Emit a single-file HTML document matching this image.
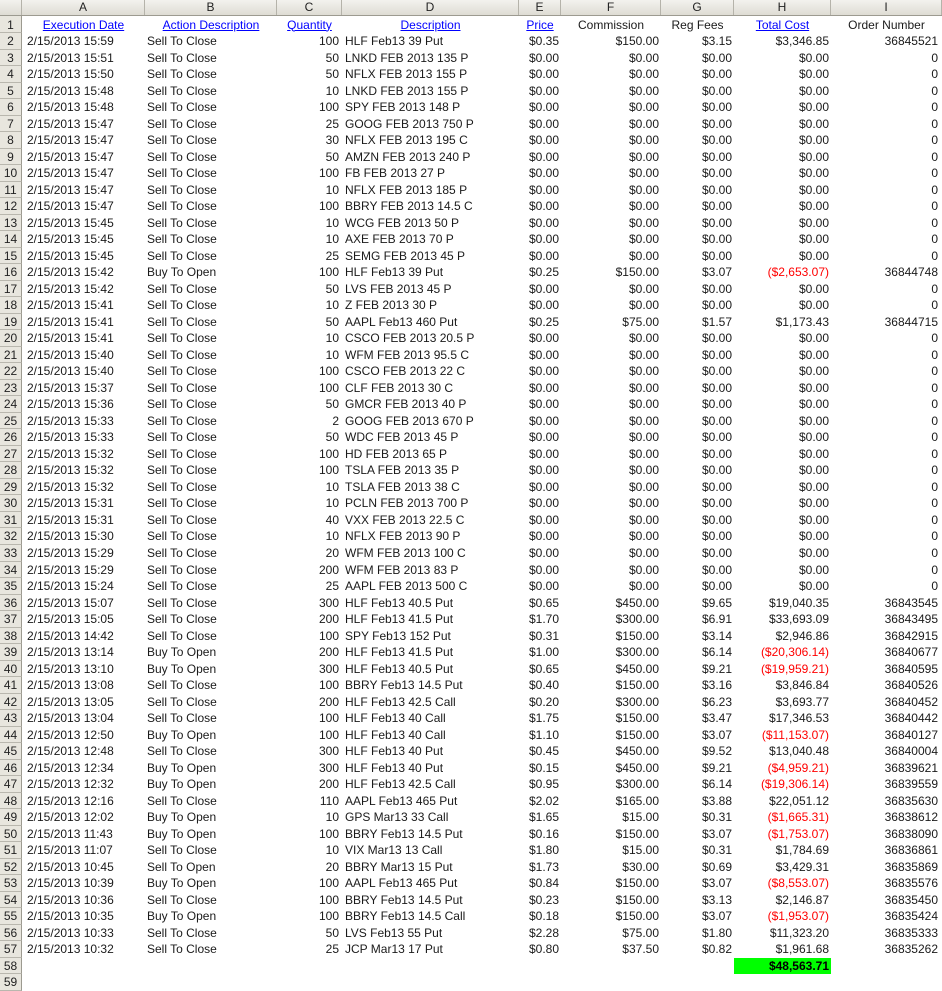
<!DOCTYPE html>
<html><head><meta charset="utf-8"><style>
*{margin:0;padding:0;box-sizing:border-box}
body{width:942px;height:980px;overflow:hidden;background:#fff;font-family:"Liberation Sans",Arial,sans-serif;font-size:12px;color:#1a1a1a;position:relative}
.hd{position:absolute;left:0;top:0;width:942px;height:15.5px;background:linear-gradient(#f3f2ee,#dedcd4);border-bottom:1px solid #9c9a90}
.hd span{position:absolute;top:0;height:15px;line-height:15px;text-align:center;border-right:1px solid #b5b3aa;font-size:12px;color:#222}
.side{position:absolute;left:0;top:15.5px;width:22px;height:965px;background:#e8e6de;border-right:1px solid #9c9a90}
.rows{position:absolute;left:0;top:16.5px;width:942px}
.r{position:relative;height:16.52px;line-height:16px;white-space:nowrap}
.r span{position:absolute;top:0;overflow:visible}
.n{left:0;width:22px;text-align:center;background:#e8e6de;border-bottom:1px solid #b9b7ae;border-right:1px solid #9c9a90;height:16.52px;font-size:12px;color:#222}
.a{left:27px}.b{left:147px}.c{left:277px;width:62px;text-align:right}.d{left:345px}
.e{left:519px;width:40px;text-align:right}.f{left:561px;width:98px;text-align:right}
.g{left:661px;width:71px;text-align:right}.h{left:734px;width:95px;text-align:right}.i{left:831px;width:107px;text-align:right}
.neg{color:#f00}
.u{color:#00f;text-decoration:underline}
.tot{background:#00ff00;font-weight:bold;color:#000;height:16px}
</style></head><body>
<div class="hd">
<span style="left:0;width:22px"></span>
<span style="left:22px;width:123px">A</span>
<span style="left:145px;width:132px">B</span>
<span style="left:277px;width:65px">C</span>
<span style="left:342px;width:177px">D</span>
<span style="left:519px;width:42px">E</span>
<span style="left:561px;width:100px">F</span>
<span style="left:661px;width:73px">G</span>
<span style="left:734px;width:97px">H</span>
<span style="left:831px;width:111px">I</span>
</div>
<div class="side"></div>
<div class="rows">
<div class="r"><span class="n">1</span><span class="u" style="left:22px;width:123px;text-align:center">Execution Date</span><span class="u" style="left:145px;width:132px;text-align:center">Action Description</span><span class="u" style="left:277px;width:65px;text-align:center">Quantity</span><span class="u" style="left:342px;width:177px;text-align:center">Description</span><span class="u" style="left:519px;width:42px;text-align:center">Price</span><span style="left:561px;width:100px;text-align:center">Commission</span><span style="left:661px;width:73px;text-align:center">Reg Fees</span><span class="u" style="left:734px;width:97px;text-align:center">Total Cost</span><span style="left:831px;width:111px;text-align:center">Order Number</span></div>
<div class="r"><span class="n">2</span><span class="a">2/15/2013 15:59</span><span class="b">Sell To Close</span><span class="c">100</span><span class="d">HLF Feb13 39 Put</span><span class="e">$0.35</span><span class="f">$150.00</span><span class="g">$3.15</span><span class="h">$3,346.85</span><span class="i">36845521</span></div>
<div class="r"><span class="n">3</span><span class="a">2/15/2013 15:51</span><span class="b">Sell To Close</span><span class="c">50</span><span class="d">LNKD FEB 2013 135 P</span><span class="e">$0.00</span><span class="f">$0.00</span><span class="g">$0.00</span><span class="h">$0.00</span><span class="i">0</span></div>
<div class="r"><span class="n">4</span><span class="a">2/15/2013 15:50</span><span class="b">Sell To Close</span><span class="c">50</span><span class="d">NFLX FEB 2013 155 P</span><span class="e">$0.00</span><span class="f">$0.00</span><span class="g">$0.00</span><span class="h">$0.00</span><span class="i">0</span></div>
<div class="r"><span class="n">5</span><span class="a">2/15/2013 15:48</span><span class="b">Sell To Close</span><span class="c">10</span><span class="d">LNKD FEB 2013 155 P</span><span class="e">$0.00</span><span class="f">$0.00</span><span class="g">$0.00</span><span class="h">$0.00</span><span class="i">0</span></div>
<div class="r"><span class="n">6</span><span class="a">2/15/2013 15:48</span><span class="b">Sell To Close</span><span class="c">100</span><span class="d">SPY FEB 2013 148 P</span><span class="e">$0.00</span><span class="f">$0.00</span><span class="g">$0.00</span><span class="h">$0.00</span><span class="i">0</span></div>
<div class="r"><span class="n">7</span><span class="a">2/15/2013 15:47</span><span class="b">Sell To Close</span><span class="c">25</span><span class="d">GOOG FEB 2013 750 P</span><span class="e">$0.00</span><span class="f">$0.00</span><span class="g">$0.00</span><span class="h">$0.00</span><span class="i">0</span></div>
<div class="r"><span class="n">8</span><span class="a">2/15/2013 15:47</span><span class="b">Sell To Close</span><span class="c">30</span><span class="d">NFLX FEB 2013 195 C</span><span class="e">$0.00</span><span class="f">$0.00</span><span class="g">$0.00</span><span class="h">$0.00</span><span class="i">0</span></div>
<div class="r"><span class="n">9</span><span class="a">2/15/2013 15:47</span><span class="b">Sell To Close</span><span class="c">50</span><span class="d">AMZN FEB 2013 240 P</span><span class="e">$0.00</span><span class="f">$0.00</span><span class="g">$0.00</span><span class="h">$0.00</span><span class="i">0</span></div>
<div class="r"><span class="n">10</span><span class="a">2/15/2013 15:47</span><span class="b">Sell To Close</span><span class="c">100</span><span class="d">FB FEB 2013 27 P</span><span class="e">$0.00</span><span class="f">$0.00</span><span class="g">$0.00</span><span class="h">$0.00</span><span class="i">0</span></div>
<div class="r"><span class="n">11</span><span class="a">2/15/2013 15:47</span><span class="b">Sell To Close</span><span class="c">10</span><span class="d">NFLX FEB 2013 185 P</span><span class="e">$0.00</span><span class="f">$0.00</span><span class="g">$0.00</span><span class="h">$0.00</span><span class="i">0</span></div>
<div class="r"><span class="n">12</span><span class="a">2/15/2013 15:47</span><span class="b">Sell To Close</span><span class="c">100</span><span class="d">BBRY FEB 2013 14.5 C</span><span class="e">$0.00</span><span class="f">$0.00</span><span class="g">$0.00</span><span class="h">$0.00</span><span class="i">0</span></div>
<div class="r"><span class="n">13</span><span class="a">2/15/2013 15:45</span><span class="b">Sell To Close</span><span class="c">10</span><span class="d">WCG FEB 2013 50 P</span><span class="e">$0.00</span><span class="f">$0.00</span><span class="g">$0.00</span><span class="h">$0.00</span><span class="i">0</span></div>
<div class="r"><span class="n">14</span><span class="a">2/15/2013 15:45</span><span class="b">Sell To Close</span><span class="c">10</span><span class="d">AXE FEB 2013 70 P</span><span class="e">$0.00</span><span class="f">$0.00</span><span class="g">$0.00</span><span class="h">$0.00</span><span class="i">0</span></div>
<div class="r"><span class="n">15</span><span class="a">2/15/2013 15:45</span><span class="b">Sell To Close</span><span class="c">25</span><span class="d">SEMG FEB 2013 45 P</span><span class="e">$0.00</span><span class="f">$0.00</span><span class="g">$0.00</span><span class="h">$0.00</span><span class="i">0</span></div>
<div class="r"><span class="n">16</span><span class="a">2/15/2013 15:42</span><span class="b">Buy To Open</span><span class="c">100</span><span class="d">HLF Feb13 39 Put</span><span class="e">$0.25</span><span class="f">$150.00</span><span class="g">$3.07</span><span class="h neg">($2,653.07)</span><span class="i">36844748</span></div>
<div class="r"><span class="n">17</span><span class="a">2/15/2013 15:42</span><span class="b">Sell To Close</span><span class="c">50</span><span class="d">LVS FEB 2013 45 P</span><span class="e">$0.00</span><span class="f">$0.00</span><span class="g">$0.00</span><span class="h">$0.00</span><span class="i">0</span></div>
<div class="r"><span class="n">18</span><span class="a">2/15/2013 15:41</span><span class="b">Sell To Close</span><span class="c">10</span><span class="d">Z FEB 2013 30 P</span><span class="e">$0.00</span><span class="f">$0.00</span><span class="g">$0.00</span><span class="h">$0.00</span><span class="i">0</span></div>
<div class="r"><span class="n">19</span><span class="a">2/15/2013 15:41</span><span class="b">Sell To Close</span><span class="c">50</span><span class="d">AAPL Feb13 460 Put</span><span class="e">$0.25</span><span class="f">$75.00</span><span class="g">$1.57</span><span class="h">$1,173.43</span><span class="i">36844715</span></div>
<div class="r"><span class="n">20</span><span class="a">2/15/2013 15:41</span><span class="b">Sell To Close</span><span class="c">10</span><span class="d">CSCO FEB 2013 20.5 P</span><span class="e">$0.00</span><span class="f">$0.00</span><span class="g">$0.00</span><span class="h">$0.00</span><span class="i">0</span></div>
<div class="r"><span class="n">21</span><span class="a">2/15/2013 15:40</span><span class="b">Sell To Close</span><span class="c">10</span><span class="d">WFM FEB 2013 95.5 C</span><span class="e">$0.00</span><span class="f">$0.00</span><span class="g">$0.00</span><span class="h">$0.00</span><span class="i">0</span></div>
<div class="r"><span class="n">22</span><span class="a">2/15/2013 15:40</span><span class="b">Sell To Close</span><span class="c">100</span><span class="d">CSCO FEB 2013 22 C</span><span class="e">$0.00</span><span class="f">$0.00</span><span class="g">$0.00</span><span class="h">$0.00</span><span class="i">0</span></div>
<div class="r"><span class="n">23</span><span class="a">2/15/2013 15:37</span><span class="b">Sell To Close</span><span class="c">100</span><span class="d">CLF FEB 2013 30 C</span><span class="e">$0.00</span><span class="f">$0.00</span><span class="g">$0.00</span><span class="h">$0.00</span><span class="i">0</span></div>
<div class="r"><span class="n">24</span><span class="a">2/15/2013 15:36</span><span class="b">Sell To Close</span><span class="c">50</span><span class="d">GMCR FEB 2013 40 P</span><span class="e">$0.00</span><span class="f">$0.00</span><span class="g">$0.00</span><span class="h">$0.00</span><span class="i">0</span></div>
<div class="r"><span class="n">25</span><span class="a">2/15/2013 15:33</span><span class="b">Sell To Close</span><span class="c">2</span><span class="d">GOOG FEB 2013 670 P</span><span class="e">$0.00</span><span class="f">$0.00</span><span class="g">$0.00</span><span class="h">$0.00</span><span class="i">0</span></div>
<div class="r"><span class="n">26</span><span class="a">2/15/2013 15:33</span><span class="b">Sell To Close</span><span class="c">50</span><span class="d">WDC FEB 2013 45 P</span><span class="e">$0.00</span><span class="f">$0.00</span><span class="g">$0.00</span><span class="h">$0.00</span><span class="i">0</span></div>
<div class="r"><span class="n">27</span><span class="a">2/15/2013 15:32</span><span class="b">Sell To Close</span><span class="c">100</span><span class="d">HD FEB 2013 65 P</span><span class="e">$0.00</span><span class="f">$0.00</span><span class="g">$0.00</span><span class="h">$0.00</span><span class="i">0</span></div>
<div class="r"><span class="n">28</span><span class="a">2/15/2013 15:32</span><span class="b">Sell To Close</span><span class="c">100</span><span class="d">TSLA FEB 2013 35 P</span><span class="e">$0.00</span><span class="f">$0.00</span><span class="g">$0.00</span><span class="h">$0.00</span><span class="i">0</span></div>
<div class="r"><span class="n">29</span><span class="a">2/15/2013 15:32</span><span class="b">Sell To Close</span><span class="c">10</span><span class="d">TSLA FEB 2013 38 C</span><span class="e">$0.00</span><span class="f">$0.00</span><span class="g">$0.00</span><span class="h">$0.00</span><span class="i">0</span></div>
<div class="r"><span class="n">30</span><span class="a">2/15/2013 15:31</span><span class="b">Sell To Close</span><span class="c">10</span><span class="d">PCLN FEB 2013 700 P</span><span class="e">$0.00</span><span class="f">$0.00</span><span class="g">$0.00</span><span class="h">$0.00</span><span class="i">0</span></div>
<div class="r"><span class="n">31</span><span class="a">2/15/2013 15:31</span><span class="b">Sell To Close</span><span class="c">40</span><span class="d">VXX FEB 2013 22.5 C</span><span class="e">$0.00</span><span class="f">$0.00</span><span class="g">$0.00</span><span class="h">$0.00</span><span class="i">0</span></div>
<div class="r"><span class="n">32</span><span class="a">2/15/2013 15:30</span><span class="b">Sell To Close</span><span class="c">10</span><span class="d">NFLX FEB 2013 90 P</span><span class="e">$0.00</span><span class="f">$0.00</span><span class="g">$0.00</span><span class="h">$0.00</span><span class="i">0</span></div>
<div class="r"><span class="n">33</span><span class="a">2/15/2013 15:29</span><span class="b">Sell To Close</span><span class="c">20</span><span class="d">WFM FEB 2013 100 C</span><span class="e">$0.00</span><span class="f">$0.00</span><span class="g">$0.00</span><span class="h">$0.00</span><span class="i">0</span></div>
<div class="r"><span class="n">34</span><span class="a">2/15/2013 15:29</span><span class="b">Sell To Close</span><span class="c">200</span><span class="d">WFM FEB 2013 83 P</span><span class="e">$0.00</span><span class="f">$0.00</span><span class="g">$0.00</span><span class="h">$0.00</span><span class="i">0</span></div>
<div class="r"><span class="n">35</span><span class="a">2/15/2013 15:24</span><span class="b">Sell To Close</span><span class="c">25</span><span class="d">AAPL FEB 2013 500 C</span><span class="e">$0.00</span><span class="f">$0.00</span><span class="g">$0.00</span><span class="h">$0.00</span><span class="i">0</span></div>
<div class="r"><span class="n">36</span><span class="a">2/15/2013 15:07</span><span class="b">Sell To Close</span><span class="c">300</span><span class="d">HLF Feb13 40.5 Put</span><span class="e">$0.65</span><span class="f">$450.00</span><span class="g">$9.65</span><span class="h">$19,040.35</span><span class="i">36843545</span></div>
<div class="r"><span class="n">37</span><span class="a">2/15/2013 15:05</span><span class="b">Sell To Close</span><span class="c">200</span><span class="d">HLF Feb13 41.5 Put</span><span class="e">$1.70</span><span class="f">$300.00</span><span class="g">$6.91</span><span class="h">$33,693.09</span><span class="i">36843495</span></div>
<div class="r"><span class="n">38</span><span class="a">2/15/2013 14:42</span><span class="b">Sell To Close</span><span class="c">100</span><span class="d">SPY Feb13 152 Put</span><span class="e">$0.31</span><span class="f">$150.00</span><span class="g">$3.14</span><span class="h">$2,946.86</span><span class="i">36842915</span></div>
<div class="r"><span class="n">39</span><span class="a">2/15/2013 13:14</span><span class="b">Buy To Open</span><span class="c">200</span><span class="d">HLF Feb13 41.5 Put</span><span class="e">$1.00</span><span class="f">$300.00</span><span class="g">$6.14</span><span class="h neg">($20,306.14)</span><span class="i">36840677</span></div>
<div class="r"><span class="n">40</span><span class="a">2/15/2013 13:10</span><span class="b">Buy To Open</span><span class="c">300</span><span class="d">HLF Feb13 40.5 Put</span><span class="e">$0.65</span><span class="f">$450.00</span><span class="g">$9.21</span><span class="h neg">($19,959.21)</span><span class="i">36840595</span></div>
<div class="r"><span class="n">41</span><span class="a">2/15/2013 13:08</span><span class="b">Sell To Close</span><span class="c">100</span><span class="d">BBRY Feb13 14.5 Put</span><span class="e">$0.40</span><span class="f">$150.00</span><span class="g">$3.16</span><span class="h">$3,846.84</span><span class="i">36840526</span></div>
<div class="r"><span class="n">42</span><span class="a">2/15/2013 13:05</span><span class="b">Sell To Close</span><span class="c">200</span><span class="d">HLF Feb13 42.5 Call</span><span class="e">$0.20</span><span class="f">$300.00</span><span class="g">$6.23</span><span class="h">$3,693.77</span><span class="i">36840452</span></div>
<div class="r"><span class="n">43</span><span class="a">2/15/2013 13:04</span><span class="b">Sell To Close</span><span class="c">100</span><span class="d">HLF Feb13 40 Call</span><span class="e">$1.75</span><span class="f">$150.00</span><span class="g">$3.47</span><span class="h">$17,346.53</span><span class="i">36840442</span></div>
<div class="r"><span class="n">44</span><span class="a">2/15/2013 12:50</span><span class="b">Buy To Open</span><span class="c">100</span><span class="d">HLF Feb13 40 Call</span><span class="e">$1.10</span><span class="f">$150.00</span><span class="g">$3.07</span><span class="h neg">($11,153.07)</span><span class="i">36840127</span></div>
<div class="r"><span class="n">45</span><span class="a">2/15/2013 12:48</span><span class="b">Sell To Close</span><span class="c">300</span><span class="d">HLF Feb13 40 Put</span><span class="e">$0.45</span><span class="f">$450.00</span><span class="g">$9.52</span><span class="h">$13,040.48</span><span class="i">36840004</span></div>
<div class="r"><span class="n">46</span><span class="a">2/15/2013 12:34</span><span class="b">Buy To Open</span><span class="c">300</span><span class="d">HLF Feb13 40 Put</span><span class="e">$0.15</span><span class="f">$450.00</span><span class="g">$9.21</span><span class="h neg">($4,959.21)</span><span class="i">36839621</span></div>
<div class="r"><span class="n">47</span><span class="a">2/15/2013 12:32</span><span class="b">Buy To Open</span><span class="c">200</span><span class="d">HLF Feb13 42.5 Call</span><span class="e">$0.95</span><span class="f">$300.00</span><span class="g">$6.14</span><span class="h neg">($19,306.14)</span><span class="i">36839559</span></div>
<div class="r"><span class="n">48</span><span class="a">2/15/2013 12:16</span><span class="b">Sell To Close</span><span class="c">110</span><span class="d">AAPL Feb13 465 Put</span><span class="e">$2.02</span><span class="f">$165.00</span><span class="g">$3.88</span><span class="h">$22,051.12</span><span class="i">36835630</span></div>
<div class="r"><span class="n">49</span><span class="a">2/15/2013 12:02</span><span class="b">Buy To Open</span><span class="c">10</span><span class="d">GPS Mar13 33 Call</span><span class="e">$1.65</span><span class="f">$15.00</span><span class="g">$0.31</span><span class="h neg">($1,665.31)</span><span class="i">36838612</span></div>
<div class="r"><span class="n">50</span><span class="a">2/15/2013 11:43</span><span class="b">Buy To Open</span><span class="c">100</span><span class="d">BBRY Feb13 14.5 Put</span><span class="e">$0.16</span><span class="f">$150.00</span><span class="g">$3.07</span><span class="h neg">($1,753.07)</span><span class="i">36838090</span></div>
<div class="r"><span class="n">51</span><span class="a">2/15/2013 11:07</span><span class="b">Sell To Close</span><span class="c">10</span><span class="d">VIX Mar13 13 Call</span><span class="e">$1.80</span><span class="f">$15.00</span><span class="g">$0.31</span><span class="h">$1,784.69</span><span class="i">36836861</span></div>
<div class="r"><span class="n">52</span><span class="a">2/15/2013 10:45</span><span class="b">Sell To Open</span><span class="c">20</span><span class="d">BBRY Mar13 15 Put</span><span class="e">$1.73</span><span class="f">$30.00</span><span class="g">$0.69</span><span class="h">$3,429.31</span><span class="i">36835869</span></div>
<div class="r"><span class="n">53</span><span class="a">2/15/2013 10:39</span><span class="b">Buy To Open</span><span class="c">100</span><span class="d">AAPL Feb13 465 Put</span><span class="e">$0.84</span><span class="f">$150.00</span><span class="g">$3.07</span><span class="h neg">($8,553.07)</span><span class="i">36835576</span></div>
<div class="r"><span class="n">54</span><span class="a">2/15/2013 10:36</span><span class="b">Sell To Close</span><span class="c">100</span><span class="d">BBRY Feb13 14.5 Put</span><span class="e">$0.23</span><span class="f">$150.00</span><span class="g">$3.13</span><span class="h">$2,146.87</span><span class="i">36835450</span></div>
<div class="r"><span class="n">55</span><span class="a">2/15/2013 10:35</span><span class="b">Buy To Open</span><span class="c">100</span><span class="d">BBRY Feb13 14.5 Call</span><span class="e">$0.18</span><span class="f">$150.00</span><span class="g">$3.07</span><span class="h neg">($1,953.07)</span><span class="i">36835424</span></div>
<div class="r"><span class="n">56</span><span class="a">2/15/2013 10:33</span><span class="b">Sell To Close</span><span class="c">50</span><span class="d">LVS Feb13 55 Put</span><span class="e">$2.28</span><span class="f">$75.00</span><span class="g">$1.80</span><span class="h">$11,323.20</span><span class="i">36835333</span></div>
<div class="r"><span class="n">57</span><span class="a">2/15/2013 10:32</span><span class="b">Sell To Close</span><span class="c">25</span><span class="d">JCP Mar13 17 Put</span><span class="e">$0.80</span><span class="f">$37.50</span><span class="g">$0.82</span><span class="h">$1,961.68</span><span class="i">36835262</span></div>
<div class="r"><span class="n">58</span><span class="h tot" style="left:734px;width:97px;padding-right:2px">$48,563.71</span></div>
<div class="r"><span class="n">59</span></div>
</div>
</body></html>
